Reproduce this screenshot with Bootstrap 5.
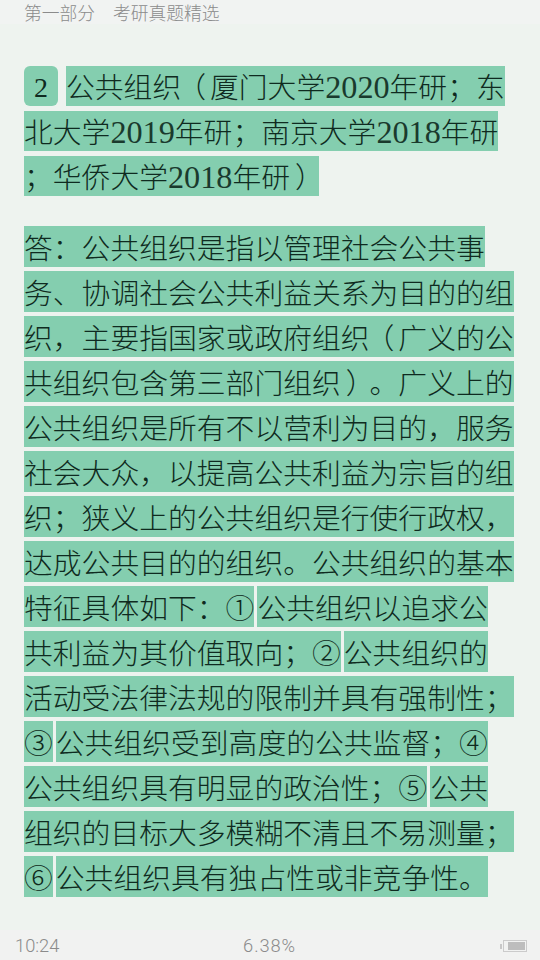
<!DOCTYPE html>
<html lang="zh"><head><meta charset="utf-8">
<link href="https://cdn.jsdelivr.net/npm/bootstrap@5.3.0/dist/css/bootstrap.min.css" rel="stylesheet">
<style>
html,body{height:100%}
body{width:540px;height:960px;background:#eef3ef;overflow:hidden;font-family:"Liberation Serif","Noto Sans CJK SC",serif;color:#0f2a20;text-spacing-trim:space-all}
.top-bar{height:24px;background:#f1f3f2;color:#8b8b8b;font:300 17.8px/24px "Noto Sans CJK SC",sans-serif;padding-left:24px;white-space:pre;text-spacing-trim:space-all}
.reader{padding:42px 0 0 24px}
.ln{height:45px;gap:3px}
.hl{background:#84ceaf;height:41px;font-size:28.8px;line-height:47px;white-space:pre;display:block;font-weight:300;overflow:hidden}
.ln-head .hl{height:40px;line-height:44px}
.num{border-radius:6px;width:34px;text-align:center;margin-right:5px;font-size:28px}
.dg{font-size:32.2px;line-height:1;opacity:.9}
.open-p{display:inline-block;font-feature-settings:"halt";width:14.4px;margin:0 4px 0 10.4px}
.close-p{display:inline-block;font-feature-settings:"halt";width:14.4px;margin:0 9.4px 0 5px}
.para-gap{height:25px}
.foot{height:30px;margin-top:auto;background:#f1f2f1;color:#8b8b8b;font:300 18.3px/1 Roboto,sans-serif;padding:2px 13px 0 15px}
.foot-l{width:60px}
.foot-r{width:63px}
.pct{letter-spacing:.9px}
.batt{width:24px;height:12px;border:1px solid #cbcbcb;padding:1px 1px 1px 4px;margin-left:1px}
.batt i{display:block;height:100%;background:#bdbdbd}
.nub{width:2px;height:5px;background:#c8c8c8}
</style></head><body class="d-flex flex-column">
<div class="top-bar">第一部分　考研真题精选</div>
<main class="reader">
<div class="d-flex ln ln-head"><span class="hl num">2</span><span class="hl">公共组织<span class="open-p">（</span>厦门大学<span class="dg">2020</span>年研；东</span></div>
<div class="d-flex ln ln-head"><span class="hl">北大学<span class="dg">2019</span>年研；南京大学<span class="dg">2018</span>年研</span></div>
<div class="d-flex ln ln-head"><span class="hl">；华侨大学<span class="dg">2018</span>年研<span class="close-p">）</span></span></div>
<div class="para-gap"></div>
<div class="d-flex ln"><span class="hl">答：公共组织是指以管理社会公共事</span></div>
<div class="d-flex ln"><span class="hl">务、协调社会公共利益关系为目的的组</span></div>
<div class="d-flex ln"><span class="hl">织，主要指国家或政府组织<span class="open-p">（</span>广义的公</span></div>
<div class="d-flex ln"><span class="hl">共组织包含第三部门组织<span class="close-p">）</span>。广义上的</span></div>
<div class="d-flex ln"><span class="hl">公共组织是所有不以营利为目的，服务</span></div>
<div class="d-flex ln"><span class="hl">社会大众，以提高公共利益为宗旨的组</span></div>
<div class="d-flex ln"><span class="hl">织；狭义上的公共组织是行使行政权，</span></div>
<div class="d-flex ln"><span class="hl">达成公共目的的组织。公共组织的基本</span></div>
<div class="d-flex ln"><span class="hl">特征具体如下：①</span><span class="hl">公共组织以追求公</span></div>
<div class="d-flex ln"><span class="hl">共利益为其价值取向；②</span><span class="hl">公共组织的</span></div>
<div class="d-flex ln"><span class="hl">活动受法律法规的限制并具有强制性；</span></div>
<div class="d-flex ln"><span class="hl">③</span><span class="hl">公共组织受到高度的公共监督；④</span></div>
<div class="d-flex ln"><span class="hl">公共组织具有明显的政治性；⑤</span><span class="hl">公共</span></div>
<div class="d-flex ln"><span class="hl">组织的目标大多模糊不清且不易测量；</span></div>
<div class="d-flex ln"><span class="hl">⑥</span><span class="hl">公共组织具有独占性或非竞争性。</span></div>
</main>
<footer class="foot d-flex align-items-center justify-content-between">
<span class="foot-l">10:24</span><span class="pct">6.38%</span>
<span class="foot-r d-flex align-items-center justify-content-end"><span class="nub"></span><span class="batt"><i></i></span></span>
</footer>
<script src="https://cdn.jsdelivr.net/npm/bootstrap@5.3.0/dist/js/bootstrap.bundle.min.js"></script>
</body></html>
